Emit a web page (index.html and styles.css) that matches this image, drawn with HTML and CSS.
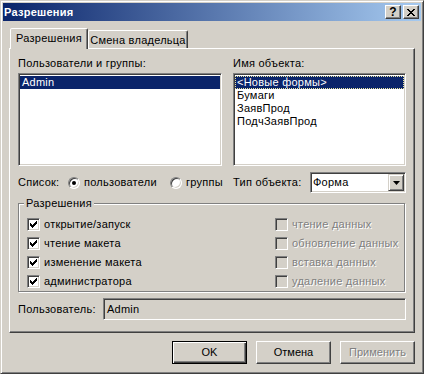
FILE: index.html
```html
<!DOCTYPE html>
<html lang="ru">
<head>
  <meta charset="UTF-8" />
  <title>Разрешения</title>
  <link rel="stylesheet" href="styles.css">
</head>
<body>
  <div class="window">
    <div class="titlebar">
      <span class="title">Разрешения</span>
      <div class="caption-buttons">
        <span class="cap-btn help">?</span>
        <span class="cap-btn">
          <svg width="8" height="7" viewBox="0 0 8 7">
            <path d="M0 0h2v1H0z M6 0h2v1H6z M1 1h2v1H1z M5 1h2v1H5z M2 2h4v1H2z M3 3h2v1H3z M2 4h4v1H2z M1 5h2v1H1z M5 5h2v1H5z M0 6h2v1H0z M6 6h2v1H6z" fill="#000"/>
          </svg>
        </span>
      </div>
    </div>

    <div class="client">
      <div class="tabs">
        <div class="tab active">Разрешения</div>
        <div class="tab">Смена владельца</div>
      </div>

      <div class="panel">
        <div class="lists">
          <div class="field users">
            <div class="field-label">Пользователи и группы:</div>
            <div class="listbox">
              <div class="item selected">Admin</div>
            </div>
          </div>
          <div class="field objects">
            <div class="field-label">Имя объекта:</div>
            <div class="listbox">
              <div class="item selected focused">&lt;Новые формы&gt;</div>
              <div class="item">Бумаги</div>
              <div class="item">ЗаявПрод</div>
              <div class="item">ПодчЗаявПрод</div>
            </div>
          </div>
        </div>

        <div class="options">
          <span class="opt-label">Список:</span>
          <span class="radio-opt first"><span class="radio checked"></span>пользователи</span>
          <span class="radio-opt second"><span class="radio"></span>группы</span>
          <span class="type-label">Тип объекта:</span>
          <div class="combo">
            <span class="combo-text">Форма</span>
            <span class="combo-btn">
              <svg width="7" height="4" viewBox="0 0 7 4"><path d="M0 0h7L3.5 4z" fill="#000"/></svg>
            </span>
          </div>
        </div>

        <div class="group">
          <span class="group-title">Разрешения</span>
          <div class="perm-grid">
            <div class="perm-col">
              <label class="perm"><span class="check"><svg width="7" height="7" viewBox="0 0 7 7"><path d="M0 2h1v3H0z M1 3h1v3H1z M2 4h1v3H2z M3 3h1v3H3z M4 2h1v3H4z M5 1h1v3H5z M6 0h1v3H6z" fill="#000"/></svg></span>открытие/запуск</label>
              <label class="perm"><span class="check"><svg width="7" height="7" viewBox="0 0 7 7"><path d="M0 2h1v3H0z M1 3h1v3H1z M2 4h1v3H2z M3 3h1v3H3z M4 2h1v3H4z M5 1h1v3H5z M6 0h1v3H6z" fill="#000"/></svg></span>чтение макета</label>
              <label class="perm"><span class="check"><svg width="7" height="7" viewBox="0 0 7 7"><path d="M0 2h1v3H0z M1 3h1v3H1z M2 4h1v3H2z M3 3h1v3H3z M4 2h1v3H4z M5 1h1v3H5z M6 0h1v3H6z" fill="#000"/></svg></span>изменение макета</label>
              <label class="perm"><span class="check"><svg width="7" height="7" viewBox="0 0 7 7"><path d="M0 2h1v3H0z M1 3h1v3H1z M2 4h1v3H2z M3 3h1v3H3z M4 2h1v3H4z M5 1h1v3H5z M6 0h1v3H6z" fill="#000"/></svg></span>администратора</label>
            </div>
            <div class="perm-col">
              <label class="perm disabled"><span class="check"></span>чтение данных</label>
              <label class="perm disabled"><span class="check"></span>обновление данных</label>
              <label class="perm disabled"><span class="check"></span>вставка данных</label>
              <label class="perm disabled"><span class="check"></span>удаление данных</label>
            </div>
          </div>
        </div>

        <div class="owner">
          <span class="owner-label">Пользователь:</span>
          <div class="edit">Admin</div>
        </div>
      </div>

      <div class="dialog-buttons">
        <button class="btn default">OK</button>
        <button class="btn">Отмена</button>
        <button class="btn" disabled>Применить</button>
      </div>
    </div>
  </div>
</body>
</html>
```

FILE: styles.css
```css
:root {
  --face: #d4d0c8;
  --shadow: #808080;
  --dark: #404040;
  --light: #ffffff;
  --select: #0a246a;
}

body {
  margin: 0;
  background: var(--face);
  font-family: "Liberation Sans", Arial, sans-serif;
  font-size: 11px;
  line-height: 13px;
  letter-spacing: 0.25px;
  color: #000;
}

.window {
  width: 424px;
  height: 374px;
  box-sizing: border-box;
  background: var(--face);
  border: 1px solid;
  border-color: var(--face) var(--dark) var(--dark) var(--face);
  box-shadow: inset 1px 1px var(--light), inset -1px -1px var(--shadow);
  padding: 2px;
  display: flex;
  flex-direction: column;
}

/* заголовок окна */
.titlebar {
  height: 18px;
  display: flex;
  align-items: center;
  padding: 0 2px 0 1px;
  background: linear-gradient(to right, #0a246a, #a6caf0);
}

.title {
  flex: 1;
  color: #fff;
  font-weight: bold;
}

.caption-buttons {
  display: flex;
  gap: 2px;
}

.cap-btn {
  width: 16px;
  height: 14px;
  box-sizing: border-box;
  display: flex;
  align-items: center;
  justify-content: center;
  background: var(--face);
  border: 1px solid;
  border-color: var(--light) var(--dark) var(--dark) var(--light);
  box-shadow: inset -1px -1px var(--shadow);
}

.cap-btn.help {
  font-weight: bold;
  font-size: 12px;
  letter-spacing: 0;
}

.client {
  flex: 1;
  padding: 7px 6px 0 6px;
  display: flex;
  flex-direction: column;
}

/* вкладки */
.tabs {
  display: flex;
  align-items: flex-end;
  height: 20px;
  padding-left: 1px;
}

.tab {
  box-sizing: border-box;
  height: 18px;
  padding-top: 3px;
  text-align: center;
  border: 1px solid;
  border-bottom: none;
  border-color: var(--light) var(--dark) transparent var(--light);
  border-radius: 2px 2px 0 0;
  box-shadow: inset -1px 0 var(--shadow);
  width: 100px;
}

.tab.active {
  width: 78px;
  height: 21px;
  padding-top: 3px;
  margin-bottom: -1px;
  background: var(--face);
  position: relative;
  z-index: 1;
}

.panel {
  height: 285px;
  box-sizing: border-box;
  border: 1px solid;
  border-color: var(--light) var(--dark) var(--dark) var(--light);
  box-shadow: inset -1px -1px var(--shadow);
  padding: 8px 8px 0 8px;
}

.lists {
  display: flex;
  gap: 11px;
}

.users {
  width: 204px;
}

.objects {
  width: 173px;
}

.field-label {
  margin-bottom: 3px;
}

.listbox {
  height: 93px;
  box-sizing: border-box;
  background: #fff;
  border: 1px solid;
  border-color: var(--shadow) var(--light) var(--light) var(--shadow);
  box-shadow: inset 1px 1px var(--dark), inset -1px -1px var(--face);
  padding: 2px 1px;
}

.item {
  height: 13px;
  padding: 0 2px;
  white-space: nowrap;
}

.item.selected {
  background: var(--select);
  color: #fff;
}

.item.focused {
  outline: 1px dotted #e8e4a0;
  outline-offset: -1px;
}

/* строка переключателей */
.options {
  display: flex;
  align-items: center;
  height: 21px;
  margin-top: 6px;
}

.opt-label {
  width: 50px;
}

.radio-opt {
  display: flex;
  align-items: center;
  gap: 4px;
}

.radio-opt.first {
  width: 102px;
}

.radio-opt.second {
  width: 63px;
}

.type-label {
  width: 77px;
}

.radio {
  width: 12px;
  height: 12px;
  box-sizing: border-box;
  border-radius: 50%;
  background: #fff;
  border: 1px solid;
  border-color: var(--shadow) var(--light) var(--light) var(--shadow);
  box-shadow: inset 1px 1px var(--dark), inset -1px -1px var(--face);
  display: flex;
  align-items: center;
  justify-content: center;
}

.radio.checked::after {
  content: "";
  width: 4px;
  height: 4px;
  border-radius: 50%;
  background: #000;
}

.combo {
  flex: 1;
  height: 21px;
  box-sizing: border-box;
  display: flex;
  align-items: stretch;
  background: #fff;
  border: 1px solid;
  border-color: var(--shadow) var(--light) var(--light) var(--shadow);
  box-shadow: inset 1px 1px var(--dark), inset -1px -1px var(--face);
  padding: 1px;
}

.combo-text {
  flex: 1;
  padding-left: 1px;
  display: flex;
  align-items: center;
}

.combo-btn {
  width: 16px;
  box-sizing: border-box;
  display: flex;
  align-items: center;
  justify-content: center;
  background: var(--face);
  border: 1px solid;
  border-color: var(--face) var(--dark) var(--dark) var(--face);
  box-shadow: inset 1px 1px var(--light), inset -1px -1px var(--shadow);
}

/* группа разрешений */
.group {
  margin-top: 10px;
  margin-right: 1px;
  border: 1px solid var(--shadow);
  box-shadow: inset 1px 1px var(--light), 1px 1px var(--light);
  padding: 0 0 0 8px;
}

.group-title {
  display: block;
  width: fit-content;
  margin: -7px 0 0 -3px;
  padding: 0 2px;
  background: var(--face);
}

.perm-grid {
  display: grid;
  grid-template-columns: 248px auto;
  margin-top: 5px;
}

.perm {
  height: 19px;
  display: flex;
  align-items: center;
  gap: 4px;
  white-space: nowrap;
}

.check {
  width: 13px;
  height: 13px;
  box-sizing: border-box;
  background: #fff;
  border: 1px solid;
  border-color: var(--shadow) var(--light) var(--light) var(--shadow);
  box-shadow: inset 1px 1px var(--dark), inset -1px -1px var(--face);
  display: flex;
  align-items: center;
  justify-content: center;
}

.perm.disabled {
  color: var(--shadow);
  text-shadow: 1px 1px 0 var(--light);
}

.perm.disabled .check {
  background: var(--face);
}

.owner {
  display: flex;
  align-items: center;
  margin-top: 6px;
}

.owner-label {
  width: 85px;
}

.edit {
  flex: 1;
  height: 22px;
  box-sizing: border-box;
  display: flex;
  align-items: center;
  padding-left: 3px;
  background: var(--face);
  border: 1px solid;
  border-color: var(--shadow) var(--light) var(--light) var(--shadow);
  box-shadow: inset 1px 1px var(--dark), inset -1px -1px var(--face);
}

/* кнопки диалога */
.dialog-buttons {
  display: flex;
  justify-content: flex-end;
  gap: 9px;
  margin-top: 8px;
}

.btn {
  width: 75px;
  height: 23px;
  margin: 0;
  padding: 0;
  font: inherit;
  color: #000;
  background: var(--face);
  border: 1px solid;
  border-color: var(--light) var(--dark) var(--dark) var(--light);
  box-shadow: inset -1px -1px var(--shadow);
}

.btn.default {
  border-color: #000;
  box-shadow: inset 1px 1px var(--light), inset -1px -1px var(--dark), inset -2px -2px var(--shadow);
}

.btn:disabled {
  color: var(--shadow);
  text-shadow: 1px 1px 0 var(--light);
}
```
